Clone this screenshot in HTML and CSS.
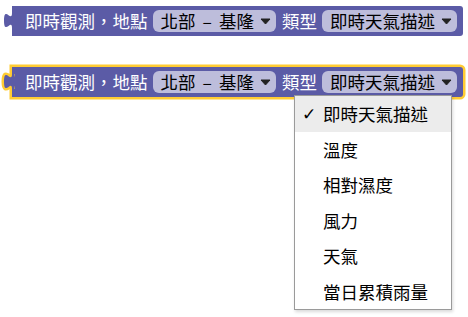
FILE: index.html
```html
<!DOCTYPE html>
<html lang="zh-Hant">
<head>
    <meta charset="UTF-8">
    <meta name="viewport" content="width=device-width, initial-scale=1.0">
    <title>即時觀測</title>
    <link rel="stylesheet" href="styles.css">
</head>
<body>
    <div class="workspace">
        <div class="block">
            <svg class="tab" viewBox="0 0 12 19">
                <path class="tab-fill" d="M12,17 H10 c0,-10 -8,8 -8,-7.5 s8,2.5 8,-7.5 H12 Z"/>
            </svg>
            <span class="label">即時觀測，地點</span>
            <span class="dropdown">
                <span class="value">北部<span class="dash">–</span>基隆</span>
                <svg class="arrow" viewBox="0 0 11 7"><path d="M1,1 H10 L5.5,6 Z"/></svg>
            </span>
            <span class="label">類型</span>
            <span class="dropdown">
                <span class="value">即時天氣描述</span>
                <svg class="arrow" viewBox="0 0 11 7"><path d="M1,1 H10 L5.5,6 Z"/></svg>
            </span>
        </div>

        <div class="block selected">
            <svg class="tab" viewBox="0 0 12 19">
                <path class="tab-outline" d="M10,17 c0,-10 -8,8 -8,-7.5 s8,2.5 8,-7.5"/>
                <path class="tab-fill" d="M12,17 H10 c0,-10 -8,8 -8,-7.5 s8,2.5 8,-7.5 H12 Z"/>
            </svg>
            <span class="label">即時觀測，地點</span>
            <span class="dropdown">
                <span class="value">北部<span class="dash">–</span>基隆</span>
                <svg class="arrow" viewBox="0 0 11 7"><path d="M1,1 H10 L5.5,6 Z"/></svg>
            </span>
            <span class="label">類型</span>
            <span class="dropdown">
                <span class="value">即時天氣描述</span>
                <svg class="arrow" viewBox="0 0 11 7"><path d="M1,1 H10 L5.5,6 Z"/></svg>
            </span>
        </div>

        <ul class="menu">
            <li class="menu-item active"><span class="check">✓</span>即時天氣描述</li>
            <li class="menu-item"><span class="check"></span>溫度</li>
            <li class="menu-item"><span class="check"></span>相對濕度</li>
            <li class="menu-item"><span class="check"></span>風力</li>
            <li class="menu-item"><span class="check"></span>天氣</li>
            <li class="menu-item"><span class="check"></span>當日累積雨量</li>
        </ul>
    </div>
</body>
</html>
```
FILE: styles.css
```css
body {
    margin: 0;
    background-color: white;
    font-family: "Noto Sans CJK TC", "Noto Sans", sans-serif;
    font-size: 17.5px;
}

.workspace {
    position: relative;
    width: 468px;
    height: 317px;
    padding-top: 6px;
    box-sizing: border-box;
}

.block {
    position: relative;
    margin-left: 12px;
    width: 451px;
    height: 30px;
    box-sizing: border-box;
    padding-left: 13px;
    display: flex;
    align-items: center;
    gap: 5px;
    background-color: #5b5ba6;
    border-radius: 0 3px 3px 0;
}

.block + .block {
    margin-top: 31px;
}

.block.selected {
    box-shadow: 0 0 0 2.5px #fc3;
}

.tab {
    position: absolute;
    left: -10px;
    top: 5px;
    width: 12px;
    height: 19px;
    overflow: visible;
}

.tab-fill {
    fill: #5b5ba6;
}

.tab-outline {
    fill: none;
    stroke: #fc3;
    stroke-width: 5;
}

.label {
    color: white;
    line-height: 1;
    white-space: nowrap;
}

.dropdown {
    display: flex;
    align-items: center;
    height: 22px;
    padding: 0 5px 0 8px;
    background-color: #bdbddb;
    border-radius: 6px;
    color: black;
    white-space: nowrap;
}

.dropdown + .label {
    margin-left: 1px;
}

.value {
    line-height: 1;
}

.dash {
    margin: 0 7px;
}

.arrow {
    width: 11px;
    height: 7px;
    margin-left: 6px;
}

.arrow path {
    fill: #222;
    stroke: #222;
    stroke-linejoin: round;
}

.menu {
    position: absolute;
    left: 294px;
    top: 95px;
    width: 158px;
    margin: 0;
    padding: 0;
    list-style: none;
    box-sizing: border-box;
    background-color: white;
    border: 1px solid #9a9a9a;
    box-shadow: 1px 2px 3px rgba(0, 0, 0, 0.15);
}

.menu-item {
    display: flex;
    align-items: center;
    height: 35.5px;
    color: black;
}

.menu-item.active {
    background-color: #ececec;
}

.check {
    width: 28px;
    text-align: center;
    font-family: "DejaVu Sans", sans-serif;
    font-size: 17px;
}
```
